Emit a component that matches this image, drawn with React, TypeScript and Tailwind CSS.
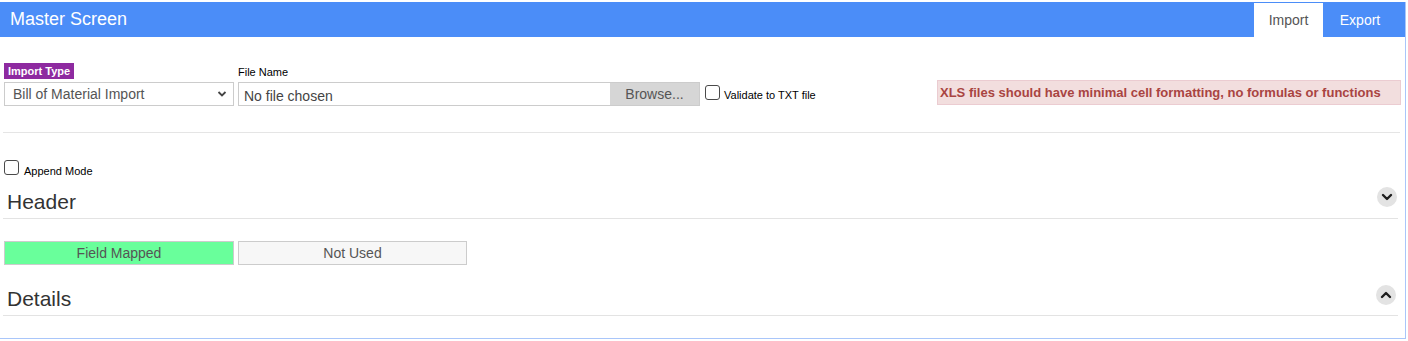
import React from 'react';

const font = { fontFamily: '"Liberation Sans", Arial, sans-serif' };

function Chevron({ up }: { up?: boolean }) {
  return (
    <div className="w-[20px] h-[20px] rounded-full bg-[#e3e3e3] flex items-center justify-center">
      <svg width="12" height="12" viewBox="0 0 12 12">
        <polyline
          points={up ? '2,8 6,4 10,8' : '2,4 6,8 10,4'}
          fill="none"
          stroke="#1e1e1e"
          strokeWidth="2.4"
          strokeLinecap="round"
          strokeLinejoin="round"
        />
      </svg>
    </div>
  );
}

function Box() {
  return <span className="inline-block w-[15px] h-[15px] border border-[#4a4a4a] rounded-[3px] bg-white shrink-0" />;
}

export default function App() {
  return (
    <div className="bg-white w-[1408px] h-[341px] pt-[2px]" style={font}>
      <div className="w-[1406px] h-[337px] border-r border-b border-[#a9c6fa]">
        {/* title bar */}
        <div className="h-[35px] bg-[#4b8df8] flex items-stretch justify-between">
          <div className="pl-[10px] pt-[7px] text-[18px] leading-[20px] text-white">Master Screen</div>
          <div className="flex items-stretch pt-[1px] pr-[8px]">
            <div className="bg-white w-[69px] text-[14px] text-[#555] flex items-center justify-center">Import</div>
            <div className="w-[74px] text-[14px] text-white flex items-center justify-center">Export</div>
          </div>
        </div>

        <div className="px-[4px]">
          {/* import row */}
          <div className="flex items-end pt-[26px]">
            <div className="flex flex-col">
              <div className="bg-[#8e2aa0] text-white text-[11px] font-bold h-[16px] leading-[16px] px-[4px] w-fit">Import Type</div>
              <div className="mt-[3px] w-[230px] h-[24px] border border-[#ccc] flex items-center justify-between pl-[8px] pr-[6px] text-[14px] text-[#555]">
                <span>Bill of Material Import</span>
                <svg width="10" height="8" viewBox="0 0 10 8">
                  <polyline points="1.5,2 5,5.5 8.5,2" fill="none" stroke="#444" strokeWidth="1.8" />
                </svg>
              </div>
            </div>
            <div className="flex flex-col ml-[4px]">
              <div className="text-[11px] text-black leading-[13px] mb-[3px]">File Name</div>
              <div className="w-[462px] h-[24px] border border-[#ccc] flex items-stretch">
                <div className="flex-1 pl-[5px] pt-[4px] text-[14px] text-[#444] leading-[18px]">No file chosen</div>
                <div className="w-[89px] bg-[#d6d6d6] text-[14px] text-[#555] flex items-center justify-center">Browse...</div>
              </div>
            </div>
            <div className="flex items-end ml-[5px] mb-[6px]">
              <Box />
              <span className="ml-[4px] text-[11px] text-black leading-[12px] -mb-[1px]">Validate to TXT file</span>
            </div>
            <div className="ml-auto w-[464px] h-[25px] mb-[1px] bg-[#f2dede] border border-[#ebccd1] text-[#a94442] font-bold text-[13px] flex items-center pl-[2px]">
              XLS files should have minimal cell formatting, no formulas or functions
            </div>
          </div>

          <div className="mt-[26px] h-px bg-[#e5e5e5] -ml-[1px] mr-[1px]" />

          {/* append mode */}
          <div className="mt-[27px] flex items-end">
            <Box />
            <span className="ml-[5px] text-[11px] text-black leading-[12px] -mb-[2px]">Append Mode</span>
          </div>

          {/* header */}
          <div className="mt-[11px] ml-[-1px] mr-[3px] border-b border-[#e3e3e3] h-[33px] flex items-start justify-between">
            <div className="pl-[4px] pt-[4px] text-[21px] leading-[24px] text-[#333]">Header</div>
            <div className="mt-[1px] mr-[1px]"><Chevron /></div>
          </div>

          <div className="mt-[22px] flex gap-[4px]">
            <div className="w-[230px] h-[24px] bg-[#69ff9b] border border-[#ccc] text-[14px] text-[#555] flex items-center justify-center">Field Mapped</div>
            <div className="w-[229px] h-[24px] bg-[#f7f7f7] border border-[#ccc] text-[14px] text-[#555] flex items-center justify-center">Not Used</div>
          </div>

          {/* details */}
          <div className="mt-[20px] ml-[-1px] mr-[3px] border-b border-[#e3e3e3] h-[31px] flex items-start justify-between">
            <div className="pl-[4px] pt-[2px] text-[21px] leading-[24px] text-[#333]">Details</div>
            <div className="mr-[2px]"><Chevron up /></div>
          </div>
        </div>
      </div>
    </div>
  );
}
